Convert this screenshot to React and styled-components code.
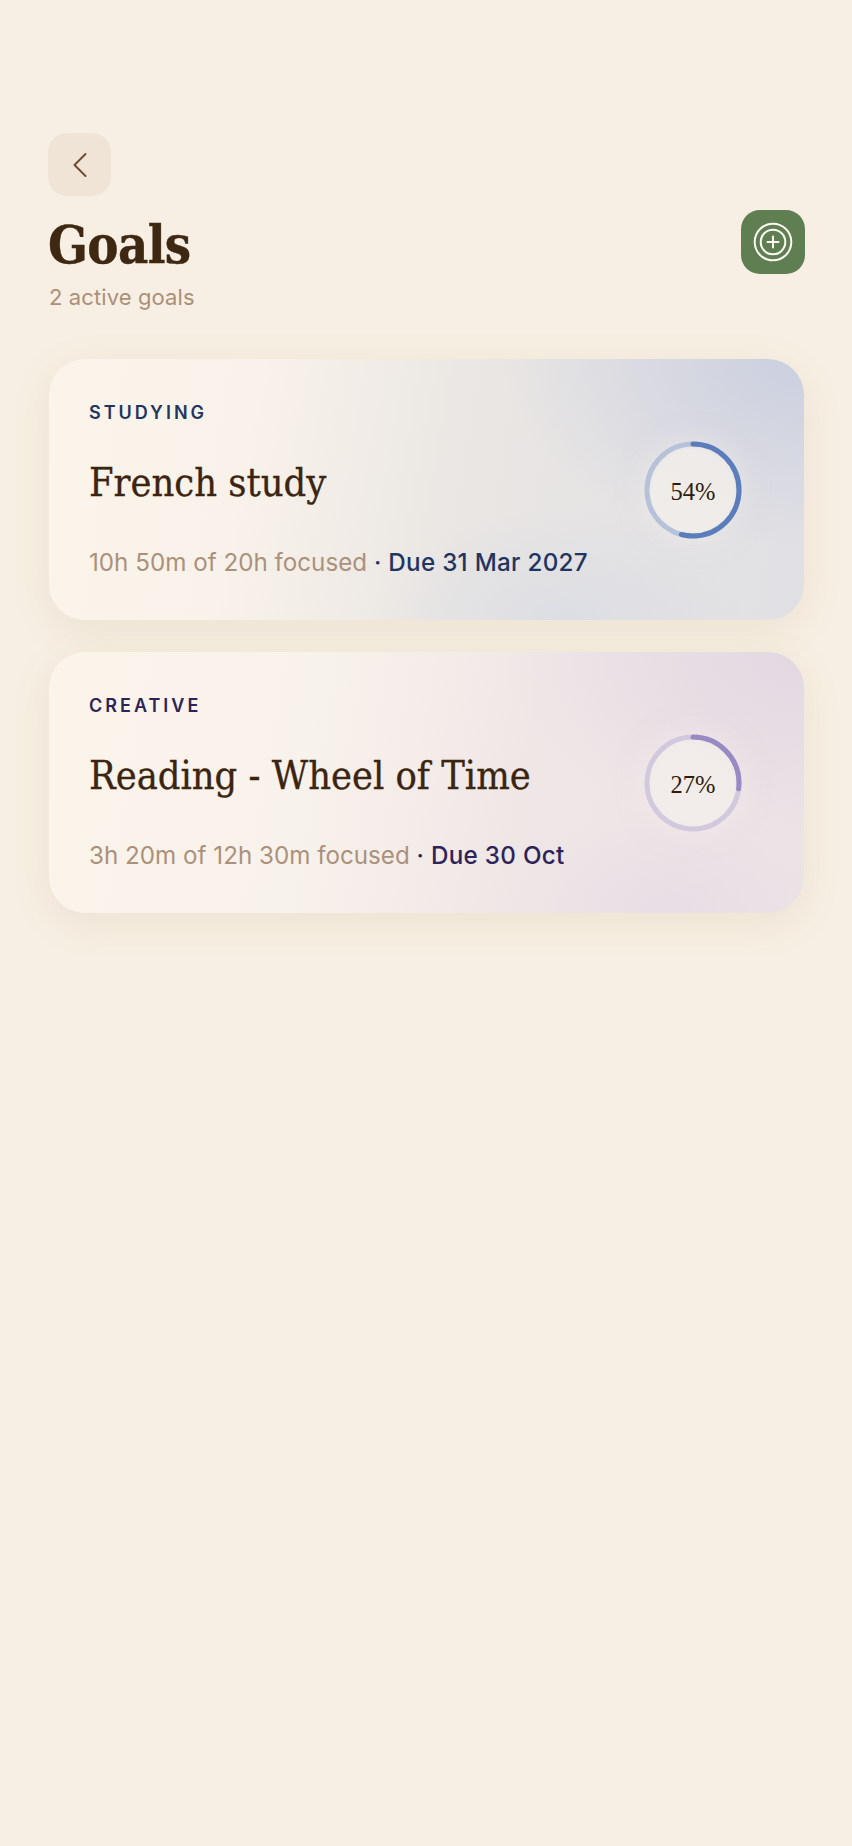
import React from "react";
import styled, { createGlobalStyle } from "styled-components";

const Global = createGlobalStyle`
  html, body { margin: 0; padding: 0; background: #f7efe3; }
  #root { min-height: 1846px; }
`;

const Page = styled.main`
  box-sizing: border-box;
  width: 852px;
  height: 1846px;
  padding: 133px 48px 0 49px;
  background: #f7efe3;
  display: flex;
  flex-direction: column;
  font-family: Inter, "Liberation Sans", sans-serif;
`;

const BackButton = styled.button`
  width: 63px;
  height: 63px;
  margin-left: -1px;
  border: 0;
  padding: 0;
  border-radius: 19px;
  background: #f0e4d6;
  color: #6f4c2f;
  display: flex;
  align-items: center;
  justify-content: center;
`;

const Header = styled.header`
  display: flex;
  justify-content: space-between;
  align-items: flex-start;
  margin-top: 14px;
`;

const TitleBlock = styled.div`
  display: flex;
  flex-direction: column;
`;

const Title = styled.h1`
  margin: 2px 0 0 -1px;
  font-family: "DejaVu Serif Condensed", "DejaVu Serif", serif;
  font-weight: 700;
  font-size: 52px;
  line-height: 66px;
  letter-spacing: -0.6px;
  -webkit-text-stroke: 0.4px #3f2812;
  color: #3f2812;
`;

const Subtitle = styled.p`
  margin: 5px 0 0 0;
  font-size: 22px;
  line-height: 28px;
  letter-spacing: 0.1px;
  color: #ab8f78;
`;

const AddButton = styled.button`
  width: 64px;
  height: 64px;
  margin-right: -1px;
  border: 0;
  padding: 0;
  border-radius: 19px;
  background: #5f7f52;
  color: #fdfaf3;
  display: flex;
  align-items: center;
  justify-content: center;
`;

const CardList = styled.div`
  display: flex;
  flex-direction: column;
  gap: 32px;
  margin-top: 48px;
`;

const Card = styled.article`
  box-sizing: border-box;
  height: 261px;
  padding: 42px 62px 0 40px;
  border-radius: 36px;
  display: flex;
  justify-content: space-between;
  background: ${(p) => p.$bg};
  box-shadow: 0 10px 40px rgba(150, 115, 70, 0.1);
`;

const CardBody = styled.div`
  display: flex;
  flex-direction: column;
  align-items: flex-start;
`;

const Label = styled.div`
  font-size: 18px;
  line-height: 24px;
  font-weight: 600;
  letter-spacing: 3px;
  color: ${(p) => p.$color};
`;

const CardTitle = styled.h2`
  margin: 32px 0 0;
  font-family: "DejaVu Serif Condensed", "DejaVu Serif", serif;
  font-weight: 400;
  font-size: 39.4px;
  line-height: 50px;
  -webkit-text-stroke: 0.3px #3b2410;
  color: #3b2410;
`;

const Meta = styled.p`
  margin: 41px 0 0;
  font-size: 24.2px;
  line-height: 30px;
  color: #ab917b;
  white-space: nowrap;
`;

const Due = styled.span`
  color: ${(p) => p.$color};
  font-weight: 550;
  letter-spacing: 0.3px;
`;

const RingWrap = styled.div`
  display: grid;
  width: 98px;
  height: 98px;
  margin-top: 40px;
  place-items: center;
  border-radius: 50%;
  background: radial-gradient(circle, rgba(244, 240, 235, 0.75) 0 58%, rgba(244, 240, 235, 0) 78%);
  box-shadow: 0 0 26px rgba(245, 242, 238, 0.5);
  & > * { grid-area: 1 / 1; }
`;

const RingText = styled.span`
  padding-top: 3px;
  font-family: "Liberation Serif", serif;
  font-size: 24.5px;
  color: #2e1c0e;
`;

const cards = [
  {
    label: "STUDYING",
    title: "French study",
    time: "10h 50m of 20h focused",
    due: "Due 31 Mar 2027",
    color: "#1f3560",
    pct: 54,
    arc: "#5b7dbc",
    track: "#b6c2d9",
    bg: `radial-gradient(ellipse 300px 190px at 100% 0%, #cbcfdf 0%, rgba(203,207,223,0) 100%),
         radial-gradient(ellipse 190px 110px at 68% 100%, rgba(216,219,228,.7) 0%, rgba(216,219,228,0) 100%),
         linear-gradient(100deg, #fbf4ea 0%, #f8f2ea 26%, #e9e6e3 55%, #e0e0e4 100%)`,
  },
  {
    label: "CREATIVE",
    title: "Reading - Wheel of Time",
    time: "3h 20m of 12h 30m focused",
    due: "Due 30 Oct",
    color: "#2d2359",
    pct: 27,
    arc: "#9a8ac4",
    track: "#d2c9de",
    bg: `radial-gradient(ellipse 300px 190px at 100% 0%, #e1d8e2 0%, rgba(225,216,226,0) 100%),
         radial-gradient(ellipse 170px 110px at 82% 100%, rgba(228,219,229,.7) 0%, rgba(228,219,229,0) 100%),
         linear-gradient(100deg, #fbf4ea 0%, #f8f2ec 34%, #efe7e6 62%, #ece3e6 100%)`,
  },
];

function Ring({ pct, arc, track }) {
  const r = 46;
  const c = 2 * Math.PI * r;
  return (
    <RingWrap>
      <svg width="98" height="98" viewBox="0 0 98 98">
        <circle cx="49" cy="49" r={r} fill="none" stroke={track} strokeWidth="5" />
        <circle
          cx="49"
          cy="49"
          r={r}
          fill="none"
          stroke={arc}
          strokeWidth="5"
          strokeLinecap="round"
          strokeDasharray={`${(c * pct) / 100} ${c}`}
          transform="rotate(-90 49 49)"
        />
      </svg>
      <RingText>{pct}%</RingText>
    </RingWrap>
  );
}

export default function App() {
  return (
    <Page>
      <Global />
      <BackButton aria-label="Back">
        <svg width="30" height="30" viewBox="0 0 30 30" fill="none" stroke="currentColor" strokeWidth="2" strokeLinecap="round" strokeLinejoin="round">
          <path d="M20.5 4 L9.5 15 L20.5 26" />
        </svg>
      </BackButton>
      <Header>
        <TitleBlock>
          <Title>Goals</Title>
          <Subtitle>2 active goals</Subtitle>
        </TitleBlock>
        <AddButton aria-label="Add goal">
          <svg width="40" height="40" viewBox="0 0 40 40" fill="none" stroke="currentColor" strokeWidth="2" strokeLinecap="round">
            <circle cx="20" cy="20" r="18.3" />
            <circle cx="20" cy="20" r="12.3" />
            <path d="M20 14.5v11M14.5 20h11" />
          </svg>
        </AddButton>
      </Header>
      <CardList>
        {cards.map((c) => (
          <Card key={c.label} $bg={c.bg}>
            <CardBody>
              <Label $color={c.color}>{c.label}</Label>
              <CardTitle>{c.title}</CardTitle>
              <Meta>
                {c.time} <Due $color={c.color}>· {c.due}</Due>
              </Meta>
            </CardBody>
            <Ring pct={c.pct} arc={c.arc} track={c.track} />
          </Card>
        ))}
      </CardList>
    </Page>
  );
}
